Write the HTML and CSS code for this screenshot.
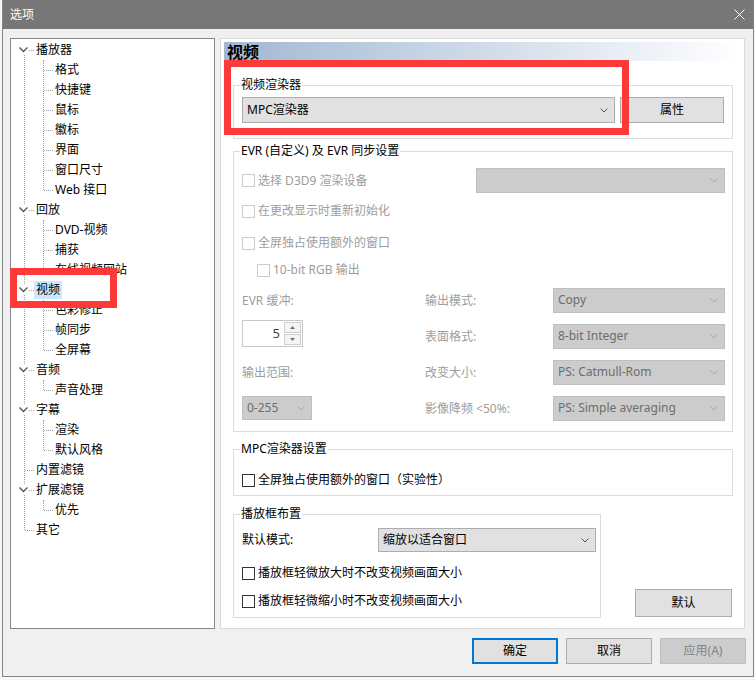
FILE: index.html
```html
<!DOCTYPE html>
<html lang="zh-CN">
<head>
<meta charset="utf-8">
<title>选项</title>
<link rel="stylesheet" href="styles.css">
</head>
<body>
<div class="window">
  <div class="titlebar">
    <span class="title">选项</span>
    <svg class="close" width="11" height="11" viewBox="0 0 11 11"><path d="M0.5 0.5 L10.5 10.5 M10.5 0.5 L0.5 10.5" stroke="#fff" stroke-width="1" fill="none"/></svg>
  </div>
  <div class="body">
    <div class="main">
      <div class="tree">
        <ul class="root">
          <li><div class="row"><svg class="chev" viewBox="0 0 11 11"><path d="M1.5 3.5 L5.5 7.5 L9.5 3.5" stroke="#555" stroke-width="1.4" fill="none"/></svg><span class="lbl">播放器</span></div>
            <ul class="kids">
              <li><div class="row"><span class="lbl">格式</span></div></li>
              <li><div class="row"><span class="lbl">快捷键</span></div></li>
              <li><div class="row"><span class="lbl">鼠标</span></div></li>
              <li><div class="row"><span class="lbl">徽标</span></div></li>
              <li><div class="row"><span class="lbl">界面</span></div></li>
              <li><div class="row"><span class="lbl">窗口尺寸</span></div></li>
              <li><div class="row"><span class="lbl">Web 接口</span></div></li>
            </ul>
          </li>
          <li><div class="row"><svg class="chev" viewBox="0 0 11 11"><path d="M1.5 3.5 L5.5 7.5 L9.5 3.5" stroke="#555" stroke-width="1.4" fill="none"/></svg><span class="lbl">回放</span></div>
            <ul class="kids">
              <li><div class="row"><span class="lbl">DVD-视频</span></div></li>
              <li><div class="row"><span class="lbl">捕获</span></div></li>
              <li><div class="row"><span class="lbl">在线视频网站</span></div></li>
            </ul>
          </li>
          <li><div class="row"><svg class="chev" viewBox="0 0 11 11"><path d="M1.5 3.5 L5.5 7.5 L9.5 3.5" stroke="#555" stroke-width="1.4" fill="none"/></svg><span class="lbl sel">视频</span></div>
            <ul class="kids">
              <li><div class="row"><span class="lbl">色彩修正</span></div></li>
              <li><div class="row"><span class="lbl">帧同步</span></div></li>
              <li><div class="row"><span class="lbl">全屏幕</span></div></li>
            </ul>
          </li>
          <li><div class="row"><svg class="chev" viewBox="0 0 11 11"><path d="M1.5 3.5 L5.5 7.5 L9.5 3.5" stroke="#555" stroke-width="1.4" fill="none"/></svg><span class="lbl">音频</span></div>
            <ul class="kids">
              <li><div class="row"><span class="lbl">声音处理</span></div></li>
            </ul>
          </li>
          <li><div class="row"><svg class="chev" viewBox="0 0 11 11"><path d="M1.5 3.5 L5.5 7.5 L9.5 3.5" stroke="#555" stroke-width="1.4" fill="none"/></svg><span class="lbl">字幕</span></div>
            <ul class="kids">
              <li><div class="row"><span class="lbl">渲染</span></div></li>
              <li><div class="row"><span class="lbl">默认风格</span></div></li>
            </ul>
          </li>
          <li><div class="row"><span class="lbl">内置滤镜</span></div></li>
          <li><div class="row"><svg class="chev" viewBox="0 0 11 11"><path d="M1.5 3.5 L5.5 7.5 L9.5 3.5" stroke="#555" stroke-width="1.4" fill="none"/></svg><span class="lbl">扩展滤镜</span></div>
            <ul class="kids">
              <li><div class="row"><span class="lbl">优先</span></div></li>
            </ul>
          </li>
          <li><div class="row"><span class="lbl">其它</span></div></li>
        </ul>
      </div>

      <div class="panel">
        <div class="hdr">视频</div>
        <div class="content">
          <fieldset class="grp g1">
            <legend>视频渲染器</legend>
            <div class="g1row">
              <div class="combo c-renderer"><span>MPC渲染器</span><svg class="arr" width="8" height="5" viewBox="0 0 8 5"><path d="M0.5 0.5 L4 4 L7.5 0.5" stroke="#555" fill="none"/></svg></div>
              <div class="btn b-prop">属性</div>
            </div>
          </fieldset>

          <fieldset class="grp g2">
            <legend>EVR (自定义) 及 EVR 同步设置</legend>
            <div class="evr-row r1">
              <div class="chk dis"><span class="cb"></span><span>选择 D3D9 渲染设备</span></div>
              <div class="combo dis c-dev"><span></span><svg class="arr" width="8" height="5" viewBox="0 0 8 5"><path d="M0.5 0.5 L4 4 L7.5 0.5" stroke="#a8a8a8" fill="none"/></svg></div>
            </div>
            <div class="evr-row r2"><div class="chk dis"><span class="cb"></span><span>在更改显示时重新初始化</span></div></div>
            <div class="evr-row r3"><div class="chk dis"><span class="cb"></span><span>全屏独占使用额外的窗口</span></div></div>
            <div class="evr-row r4"><div class="chk dis"><span class="cb"></span><span>10-bit RGB 输出</span></div></div>
            <div class="evr-grid">
              <div class="lab dis">EVR 缓冲:</div>
              <div class="lab dis">输出模式:</div>
              <div class="combo dis c-r"><span>Copy</span><svg class="arr" width="8" height="5" viewBox="0 0 8 5"><path d="M0.5 0.5 L4 4 L7.5 0.5" stroke="#a8a8a8" fill="none"/></svg></div>

              <div class="spin"><span class="val">5</span><span class="arrows"><span class="up"><svg width="5" height="3" viewBox="0 0 5 3"><path d="M0 3 L2.5 0 L5 3 Z" fill="#707070"/></svg></span><span class="dn"><svg width="5" height="3" viewBox="0 0 5 3"><path d="M0 0 L2.5 3 L5 0 Z" fill="#707070"/></svg></span></span></div>
              <div class="lab dis">表面格式:</div>
              <div class="combo dis c-r"><span>8-bit Integer</span><svg class="arr" width="8" height="5" viewBox="0 0 8 5"><path d="M0.5 0.5 L4 4 L7.5 0.5" stroke="#a8a8a8" fill="none"/></svg></div>

              <div class="lab dis">输出范围:</div>
              <div class="lab dis">改变大小:</div>
              <div class="combo dis c-r"><span>PS: Catmull-Rom</span><svg class="arr" width="8" height="5" viewBox="0 0 8 5"><path d="M0.5 0.5 L4 4 L7.5 0.5" stroke="#a8a8a8" fill="none"/></svg></div>

              <div class="combo dis c-range"><span>0-255</span><svg class="arr" width="8" height="5" viewBox="0 0 8 5"><path d="M0.5 0.5 L4 4 L7.5 0.5" stroke="#a8a8a8" fill="none"/></svg></div>
              <div class="lab dis">影像降频 &lt;50%:</div>
              <div class="combo dis c-r"><span>PS: Simple averaging</span><svg class="arr" width="8" height="5" viewBox="0 0 8 5"><path d="M0.5 0.5 L4 4 L7.5 0.5" stroke="#a8a8a8" fill="none"/></svg></div>
            </div>
          </fieldset>

          <fieldset class="grp g3">
            <legend>MPC渲染器设置</legend>
            <div class="chk"><span class="cb"></span><span>全屏独占使用额外的窗口（实验性）</span></div>
          </fieldset>

          <div class="lower">
            <fieldset class="grp g4">
              <legend>播放框布置</legend>
              <div class="g4row">
                <span>默认模式:</span>
                <div class="combo c-mode"><span>缩放以适合窗口</span><svg class="arr" width="8" height="5" viewBox="0 0 8 5"><path d="M0.5 0.5 L4 4 L7.5 0.5" stroke="#555" fill="none"/></svg></div>
              </div>
              <div class="chk c4a"><span class="cb"></span><span>播放框轻微放大时不改变视频画面大小</span></div>
              <div class="chk c4b"><span class="cb"></span><span>播放框轻微缩小时不改变视频画面大小</span></div>
            </fieldset>
            <div class="btn b-def">默认</div>
          </div>
        </div>
      </div>
    </div>

    <div class="buttons">
      <div class="btn b-ok">确定</div>
      <div class="btn">取消</div>
      <div class="btn b-dis">应用(A)</div>
    </div>
  </div>

  <div class="mark m1"></div>
  <div class="mark m2"></div>
</div>
</body>
</html>
```

FILE: styles.css
```css
html, body {
  margin: 0;
  padding: 0;
  background: #f6f6f6;
}
body {
  font-family: "Noto Sans", "Noto Sans CJK SC", sans-serif;
  font-size: 12px;
  line-height: 16px;
  color: #000;
}
.window {
  position: relative;
  margin-left: 2px;
  width: 752px;
  height: 677px;
  box-sizing: border-box;
  border: 1px solid #858585;
  border-top: none;
  background: #f0f0f0;
  display: flex;
  flex-direction: column;
}
.titlebar {
  height: 29px;
  background: #777777;
  color: #fff;
  display: flex;
  align-items: center;
  justify-content: space-between;
  padding: 0 8px 0 7px;
  flex-shrink: 0;
}
.title { font-size: 12px; }
.close { display: block; }

.body {
  padding: 9px 7px 12px 7px;
  display: flex;
  flex-direction: column;
}
.main {
  display: flex;
  gap: 5px;
  height: 591px;
  margin-right: 1px;
}

/* tree */
.tree {
  width: 205px;
  height: 591px;
  box-sizing: border-box;
  border: 1px solid #828790;
  background: #fff;
  padding-top: 1px;
  flex-shrink: 0;
}
.tree ul {
  list-style: none;
  margin: 0;
  padding: 0;
  position: relative;
}
.root::before {
  content: "";
  position: absolute;
  left: 13px;
  top: 10px;
  bottom: 10px;
  border-left: 1px dotted #a0a0a0;
}
.kids::before {
  content: "";
  position: absolute;
  left: 32px;
  top: 0;
  bottom: 10px;
  border-left: 1px dotted #a0a0a0;
}
.row {
  position: relative;
  height: 20px;
  display: flex;
  align-items: center;
  padding-left: 23px;
}
.row::before {
  content: "";
  position: absolute;
  left: 14px;
  width: 9px;
  top: 10px;
  border-top: 1px dotted #a0a0a0;
}
.kids .row { padding-left: 42px; }
.kids .row::before { left: 33px; width: 9px; }
.chev {
  position: absolute;
  left: 7px;
  top: 4px;
  width: 11px;
  height: 11px;
  background: #fff;
  z-index: 1;
}
.lbl {
  padding: 0 2px;
  line-height: 18px;
  white-space: nowrap;
}
.lbl.sel { background: #cce8ff; }

/* panel */
.panel {
  width: 525px;
  height: 591px;
  box-sizing: border-box;
  border: 1px solid #dadada;
  background: #fff;
  padding: 3px 3px 0 3px;
}
.hdr {
  height: 19px;
  background: linear-gradient(to right, #a2b8d2 0%, #f7f9fc 92%, #ffffff 100%);
  font-family: "Noto Sans CJK SC", sans-serif;
  font-weight: bold;
  font-size: 16px;
  line-height: 19px;
  padding-left: 3px;
}
.content {
  padding: 16px 8px 0 9px;
}
.grp {
  margin: 0;
  border: 1px solid #dcdcdc;
  min-width: 0;
}
.grp legend {
  padding: 0 1px;
  margin-left: -2px;
  line-height: 16px;
}
.g1 { padding: 4px 7px 15px 8px; }
.g1row { display: flex; gap: 5px; }
.c-renderer { width: 373px; height: 26px; }
.b-prop { width: 104px; height: 26px; }

.g2 { margin-top: 4px; padding: 9px 7px 5px 8px; }
.g2 legend { color: #000; }
.evr-row { display: flex; align-items: center; justify-content: space-between; height: 24px; }
.evr-row.r1 { height: 25px; }
.evr-row.r2 { margin-top: 6px; }
.evr-row.r3 { margin-top: 8px; }
.evr-row.r4 { margin-top: 3px; padding-left: 15px; justify-content: flex-start; }
.c-dev { width: 249px; height: 25px; }
.evr-grid {
  display: grid;
  grid-template-columns: 183px 128px 172px;
  grid-template-rows: repeat(4, 36px);
  align-items: center;
}
.c-r { height: 25px; }
.c-range { width: 70px; height: 24px; }
.lab { padding-top: 2px; }

.spin {
  align-self: start;
  margin-top: 2px;
  width: 61px;
  height: 27px;
  box-sizing: border-box;
  border: 1px solid #c8c8c8;
  display: flex;
  background: #fff;
}
.spin .val {
  flex: 1;
  text-align: right;
  padding-right: 4px;
  line-height: 24px;
  font-size: 13px;
  color: #444;
}
.spin .arrows {
  width: 17px;
  display: flex;
  flex-direction: column;
  padding: 1px 1px 1px 0;
  gap: 1px;
}
.spin .up, .spin .dn {
  flex: 1;
  border: 1px solid #cfcfcf;
  background: #f4f4f4;
  display: flex;
  align-items: center;
  justify-content: center;
}
.spin svg { display: block; }

.g3 { margin-top: 9px; padding: 13px 7px 5px 8px; }
.g3 .chk { height: 20px; }

.lower { display: flex; align-items: flex-end; margin-top: 10px; }
.g4 { width: 368px; box-sizing: border-box; padding: 6px 4px 6px 8px; }
.g4row { display: flex; align-items: center; justify-content: space-between; height: 24px; }
.c-mode { width: 218px; height: 24px; font-size: 12px; }
.c4a { margin-top: 11px; height: 20px; }
.c4b { margin-top: 8px; height: 20px; }
.b-def { width: 97px; height: 28px; margin-left: 34px; margin-bottom: 1px; }

/* controls */
.chk { display: flex; align-items: center; white-space: nowrap; }
.cb {
  width: 13px;
  height: 13px;
  box-sizing: border-box;
  border: 1px solid #333;
  background: #fff;
  margin-right: 3px;
  flex-shrink: 0;
}
.chk.dis { color: #9d9d9d; }
.chk.dis .cb { border-color: #cccccc; }
.lab.dis { color: #9d9d9d; }

.combo {
  display: flex;
  align-items: center;
  justify-content: space-between;
  box-sizing: border-box;
  border: 1px solid #adadad;
  background: #e1e1e1;
  padding: 0 6px 0 4px;
  white-space: nowrap;
}
.combo .arr { display: block; flex-shrink: 0; }
.combo.dis {
  background: #cccccc;
  border-color: #bfbfbf;
  color: #6d6d6d;
}

.btn {
  display: flex;
  align-items: center;
  justify-content: center;
  box-sizing: border-box;
  border: 1px solid #adadad;
  background: #e1e1e1;
}

.buttons {
  display: flex;
  justify-content: flex-end;
  gap: 8px;
  margin-top: 9px;
  padding-right: 0;
}
.buttons .btn { width: 86px; height: 26px; }
.buttons .b-ok { border: 2px solid #0078d7; }
.buttons .b-dis { background: #cccccc; border-color: #bfbfbf; color: #838383; }

/* annotation marks */
.mark {
  position: absolute;
  border: 7px solid #fd3a3a;
  box-sizing: border-box;
  pointer-events: none;
}
.m1 { left: 221px; top: 60px; width: 405px; height: 75px; }
.m2 { left: 7px; top: 268px; width: 107px; height: 40px; }
```
